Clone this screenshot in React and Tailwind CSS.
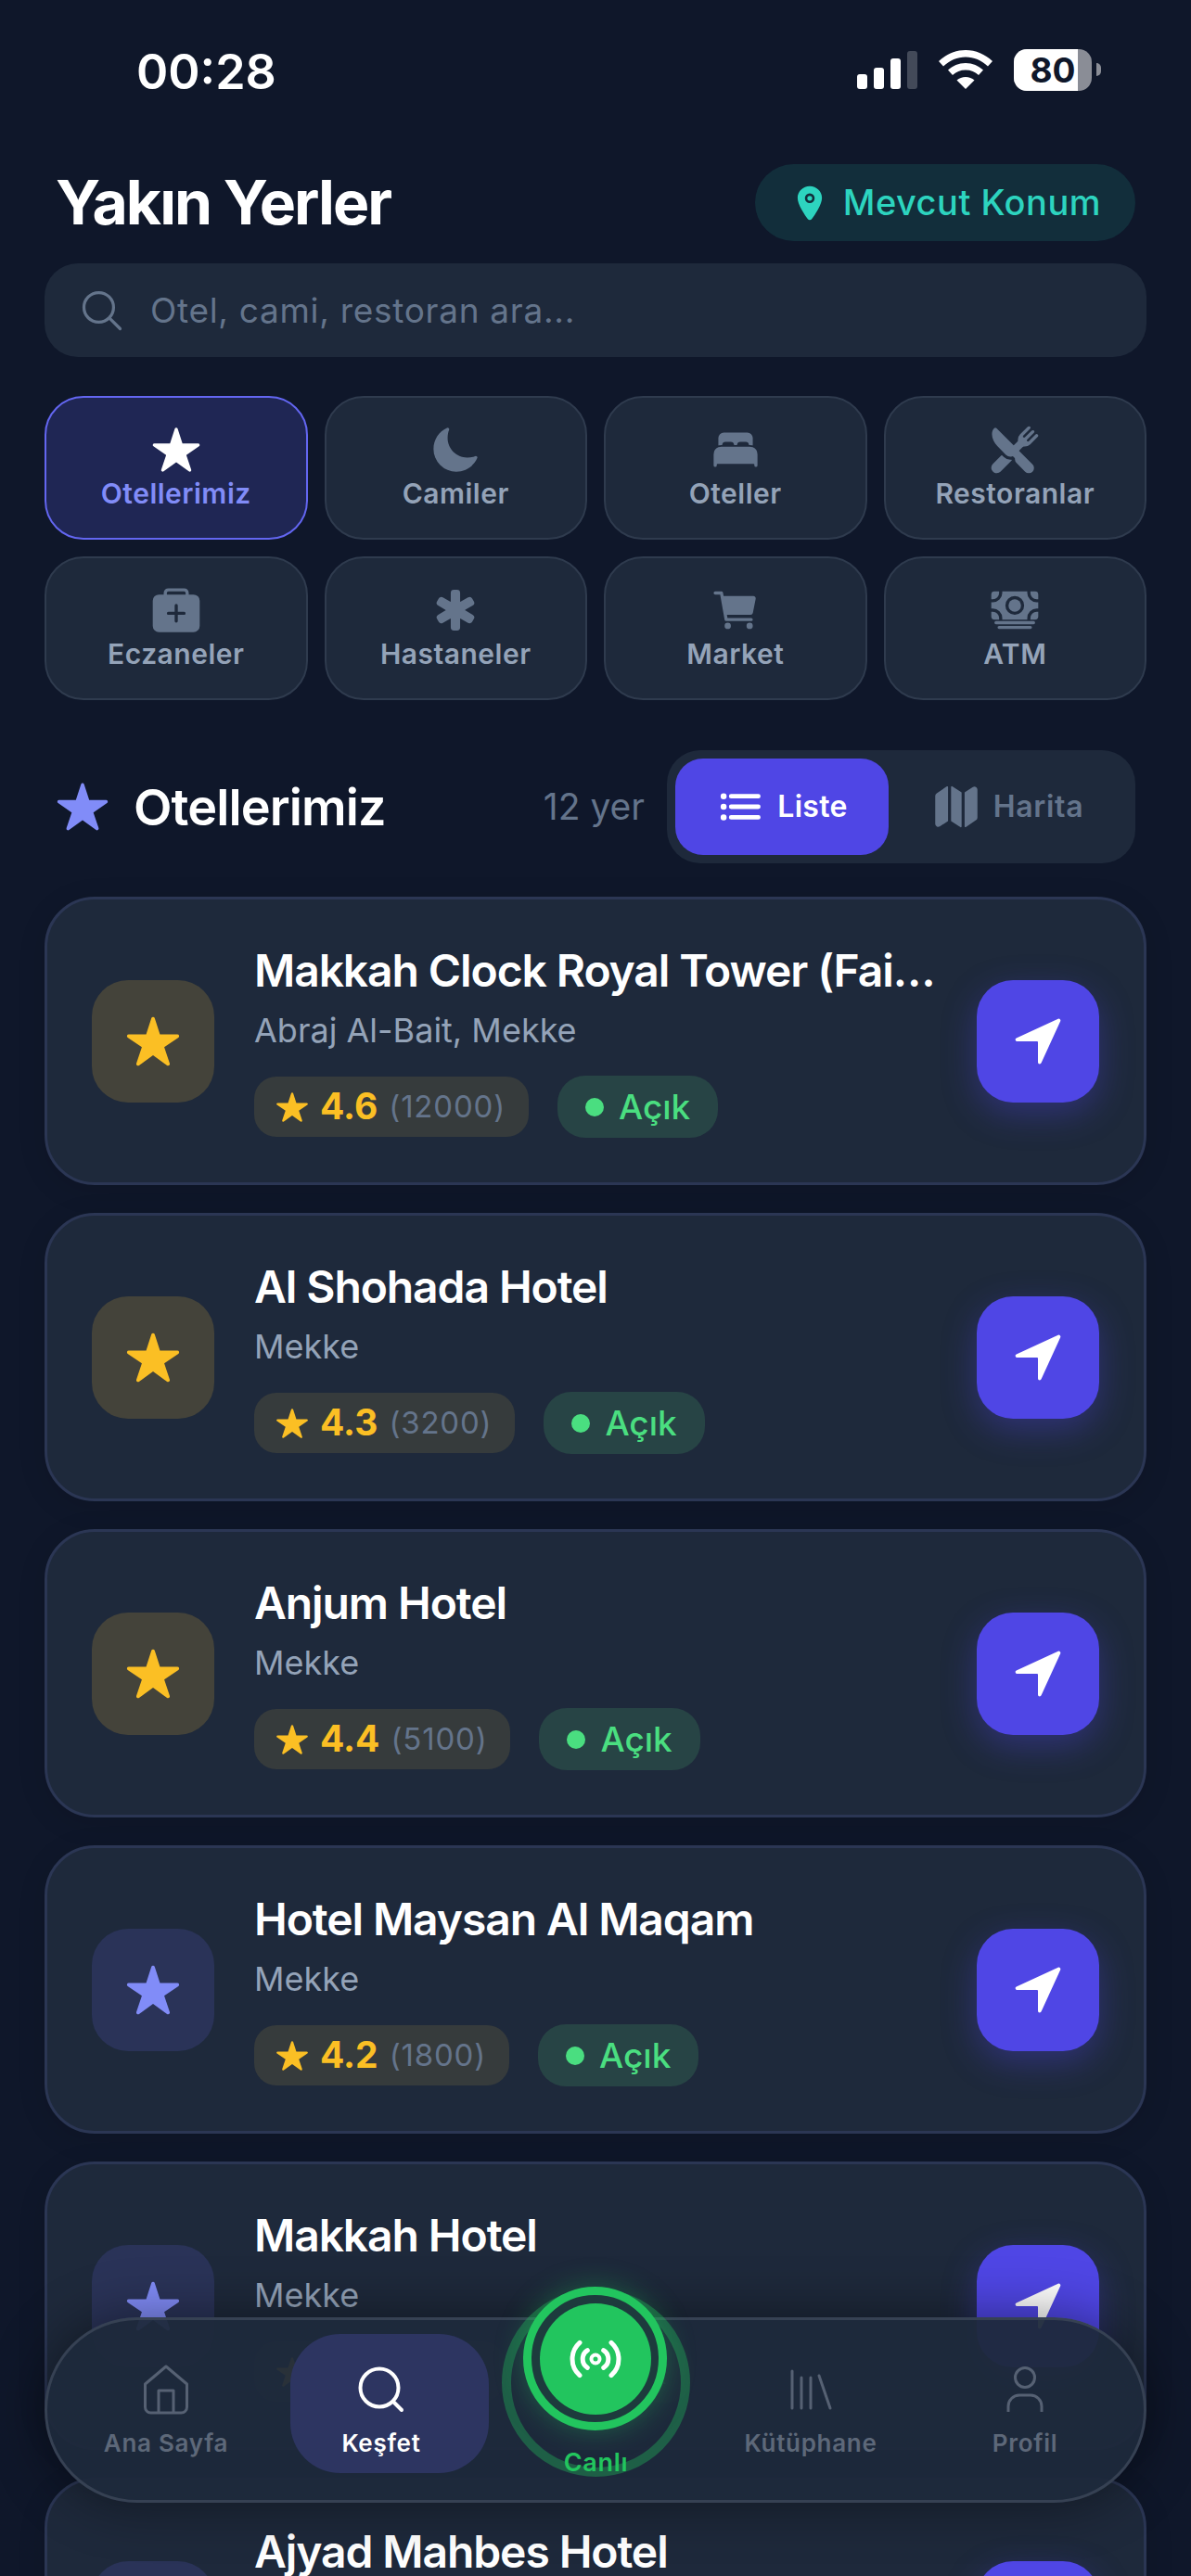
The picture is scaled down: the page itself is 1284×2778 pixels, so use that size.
import {
  IoStar,
  IoMoon,
  IoBed,
  IoRestaurant,
  IoMedkit,
  IoMedical,
  IoCart,
  IoCash,
  IoNavigate,
  IoList,
  IoMap,
  IoSearchOutline,
  IoLocation,
} from 'react-icons/io5';

const chips = [
  { label: 'Otellerimiz', icon: IoStar, active: true },
  { label: 'Camiler', icon: IoMoon },
  { label: 'Oteller', icon: IoBed },
  { label: 'Restoranlar', icon: IoRestaurant },
  { label: 'Eczaneler', icon: IoMedkit },
  { label: 'Hastaneler', icon: IoMedical },
  { label: 'Market', icon: IoCart },
  { label: 'ATM', icon: IoCash },
];

const places = [
  { name: 'Makkah Clock Royal Tower (Faisal Suite)', area: 'Abraj Al-Bait, Mekke', rating: '4.6', count: '12000', gold: true },
  { name: 'Al Shohada Hotel', area: 'Mekke', rating: '4.3', count: '3200', gold: true },
  { name: 'Anjum Hotel', area: 'Mekke', rating: '4.4', count: '5100', gold: true },
  { name: 'Hotel Maysan Al Maqam', area: 'Mekke', rating: '4.2', count: '1800' },
  { name: 'Makkah Hotel', area: 'Mekke', rating: '4.1', count: '2500' },
  { name: 'Ajyad Mahbes Hotel', area: 'Mekke', rating: '4.0', count: '900' },
];

const HomeIcon = () => (
  <svg width="50" height="54" viewBox="0 0 50 54" fill="none" stroke="currentColor" strokeWidth="3" strokeLinejoin="round">
    <path d="M25 2 L2.500 21 V46 a6 6 0 0 0 6 6 H41.500 a6 6 0 0 0 6-6 V21 Z" />
    <path d="M17 52 V28 H33 V52" />
  </svg>
);

const SearchIcon = () => (
  <svg width="50" height="50" viewBox="0 0 50 50" fill="none" stroke="currentColor" strokeWidth="4" strokeLinecap="round">
    <circle cx="23" cy="23" r="20.500" />
    <path d="M38 38 L47 47" />
  </svg>
);

const LibraryIcon = () => (
  <svg width="46" height="44" viewBox="0 0 46 44" fill="none" stroke="currentColor" strokeWidth="3" strokeLinecap="round">
    <path d="M3 2 V42 M13 9 V42 M23 9 V42 M32 7 L44 42" />
  </svg>
);

const PersonIcon = () => (
  <svg width="40" height="50" viewBox="0 0 40 50" fill="none" stroke="currentColor" strokeWidth="3">
    <circle cx="20" cy="12" r="10.500" />
    <path d="M2 49 V43 a12 12 0 0 1 12-12 H26 a12 12 0 0 1 12 12 V49" />
  </svg>
);

const LiveIcon = () => (
  <svg width="60" height="48" viewBox="0 0 60 48" fill="none" stroke="#fff" strokeWidth="5" strokeLinecap="round">
    <path d="M13 6.300 A23.600 23.600 0 0 0 13 41.700 M47 6.300 A23.600 23.600 0 0 1 47 41.700" />
    <path d="M21.300 14.700 A11 11 0 0 0 21.300 33.300 M38.700 14.700 A11 11 0 0 1 38.700 33.300" />
    <circle cx="30" cy="24" r="4.500" strokeWidth="4" />
  </svg>
);

const StatusBar = () => (
  <div className="flex items-center justify-between h-[177px] pb-[27px] pl-[99px] pr-[49px]">
    <span className="mt-[6px] text-[52px] font-semibold text-white">00:28</span>
    <div className="flex items-center">
      <div className="flex items-end gap-[7px] h-[41px]">
        <div className="w-[11px] h-[16px] rounded-[3px] bg-white" />
        <div className="w-[11px] h-[23px] rounded-[3px] bg-white" />
        <div className="w-[11px] h-[33px] rounded-[3px] bg-white" />
        <div className="w-[11px] h-[41px] rounded-[3px] bg-[#434a59]" />
      </div>
      <svg width="58" height="42" viewBox="0 0 58 42" className="ml-[23px]">
        <path d="M29 0C18 0 8 4.500 0 12l5 5.500C12 11 20 7.500 29 7.500S46 11 53 17.500l5-5.500C50 4.500 40 0 29 0z" fill="#fff" />
        <path d="M29 14c-7.500 0-14 3-19 7.500l5 5.500c3.500-3.500 8.500-5.500 14-5.500s10.500 2 14 5.500l5-5.500C43 17 36.500 14 29 14z" fill="#fff" />
        <path d="M29 29c-3.500 0-7 1.300-9.500 3.500L29 42l9.500-9.500C36 30.300 32.500 29 29 29z" fill="#fff" />
      </svg>
      <div className="relative ml-[23px] w-[84px] h-[45px] rounded-[14px] overflow-hidden bg-[#8a8d96] flex items-center justify-center">
        <div className="absolute left-0 top-0 bottom-0 w-[69px] bg-white" />
        <span className="relative text-[37px] font-bold leading-none text-[#0f172a]">80</span>
      </div>
      <div className="ml-[5px] w-[5px] h-[14px] rounded-r-full bg-[#8a8d96]" />
    </div>
  </div>
);

const PlaceCard = ({ place }) => (
  <div className="flex items-center gap-[43px] h-[311px] shrink-0 px-[48px] rounded-[54px] bg-[#1e293b] border-[3px] border-[#2b3654] shadow-[0_6px_30px_rgba(0,0,0,0.12)]">
    <div
      className={`flex items-center justify-center shrink-0 w-[132px] h-[132px] rounded-[39px] ${
        place.gold ? 'bg-[#44433a]' : 'bg-[#2a3358]'
      }`}
    >
      <IoStar className={`w-[60px] h-[60px] ${place.gold ? 'text-[#fbbf24]' : 'text-[#818cf8]'}`} />
    </div>
    <div className="flex-1 min-w-0">
      <div className="text-[48px] leading-[58px] font-semibold tracking-[-1.1px] text-white truncate">{place.name}</div>
      <div className="mt-[11px] text-[36px] leading-[48px] text-[#94a3b8]">{place.area}</div>
      <div className="mt-[25px] flex items-center gap-[31px]">
        <div className="flex items-center gap-[12px] h-[65px] pl-[23px] pr-[25px] rounded-[24px] bg-[#363b3c]">
          <IoStar className="w-[36px] h-[36px] text-[#fbbf24]" />
          <span className="text-[39px] font-bold text-[#fbbf24]">{place.rating}</span>
          <span className="text-[33px] text-[#64748b] tracking-[0.8px]">({place.count})</span>
        </div>
        <div className="flex items-center gap-[16px] h-[67px] px-[30px] rounded-[30px] bg-[#274445]">
          <div className="w-[20px] h-[20px] rounded-full bg-[#4ade80]" />
          <span className="text-[37px] font-medium text-[#4ade80]">Açık</span>
        </div>
      </div>
    </div>
    <div className="flex items-center justify-center shrink-0 w-[132px] h-[132px] rounded-[39px] bg-[#4f46e5] shadow-[0_12px_36px_rgba(79,70,229,0.35)]">
      <IoNavigate className="w-[60px] h-[60px] text-white" />
    </div>
  </div>
);

const NavItem = ({ label, icon: Icon, width, active }) => (
  <div
    className={`flex flex-col items-center shrink-0 h-[150px] pt-[32px] rounded-[54px] ${width} ${
      active ? 'bg-[#2d3561] text-white pr-[18px]' : 'text-[#566173]'
    }`}
  >
    <div className="flex items-center justify-center h-[56px]">
      <Icon />
    </div>
    <span className={`mt-[13px] text-[26px] leading-[34px] font-semibold tracking-[0.7px] ${active ? 'text-white' : 'text-[#5d6879]'}`}>
      {label}
    </span>
  </div>
);

const BottomNav = () => (
  <div className="absolute left-[48px] right-[48px] top-[2499px] h-[200px] flex items-start gap-[21px] pl-[15px] pt-[15px] rounded-[100px] bg-[#1e293b]/95 border-[3px] border-[#364153] shadow-[0_0_60px_rgba(0,0,0,0.45)]">
    <NavItem label="Ana Sayfa" icon={HomeIcon} width="w-[226px]" />
    <NavItem label="Keşfet" icon={SearchIcon} width="w-[214px]" active />
    <div className="w-[188px] shrink-0" />
    <NavItem label="Kütüphane" icon={LibraryIcon} width="w-[234px]" />
    <NavItem label="Profil" icon={PersonIcon} width="w-[186px]" />

    {/* live button sticks out of the bar */}
    <div className="absolute left-[490px] top-[-34px] w-[203px] h-[203px] rounded-full border-[10px] border-[#22c55e]/35" />
    <div className="absolute left-[513px] top-[-36px] w-[155px] h-[155px] rounded-full border-[9px] border-[#22c55e] bg-[#1d3b3d] flex items-center justify-center shadow-[0_0_30px_rgba(34,197,94,0.35)]">
      <div className="w-[120px] h-[120px] rounded-full bg-[#22c55e] flex items-center justify-center">
        <LiveIcon />
      </div>
    </div>
    <span className="absolute left-[490px] w-[203px] top-[137px] text-center text-[27px] leading-[34px] font-semibold tracking-[0.7px] text-[#22c55e]">
      Canlı
    </span>
  </div>
);

export default function App() {
  return (
    <div className="relative h-[2778px] overflow-hidden bg-[#0f172a] font-['Inter',sans-serif] px-[48px]">
      <StatusBar />

      <div className="flex items-center justify-between h-[83px] pl-[12px] mr-[12px]">
        <h1 className="text-[66px] font-bold tracking-[-2px] text-white">Yakın Yerler</h1>
        <div className="flex items-center gap-[15px] h-[83px] pl-[38px] pr-[37px] rounded-full bg-[#122e3b]">
          <IoLocation className="w-[42px] h-[42px] text-[#2dd4bf]" />
          <span className="text-[38px] font-medium tracking-[0.5px] text-[#2dd4bf]">Mevcut Konum</span>
        </div>
      </div>

      <div className="mt-[24px] flex items-center gap-[26px] h-[101px] px-[36px] rounded-[36px] bg-[#1e293b]">
        <IoSearchOutline className="w-[52px] h-[52px] text-[#64748b]" />
        <span className="text-[37px] tracking-[0.7px] text-[#64748b]">Otel, cami, restoran ara...</span>
      </div>

      <div className="mt-[42px] grid grid-cols-4 gap-[18px]">
        {chips.map((chip) => (
          <div
            key={chip.label}
            className={`flex flex-col items-center h-[155px] pt-[29px] rounded-[42px] border-[2px] ${
              chip.active ? 'bg-[#1f2654] border-[#6366f1]' : 'bg-[#1e293b] border-[#2f3b4e]'
            }`}
          >
            <chip.icon className={`w-[54px] h-[54px] ${chip.active ? 'text-white' : 'text-[#64748b]'}`} />
            <span className={`text-[30px] leading-[40px] font-semibold tracking-[0.5px] ${chip.active ? 'text-[#818cf8]' : 'text-[#94a3b8]'}`}>
              {chip.label}
            </span>
          </div>
        ))}
      </div>

      <div className="mt-[54px] flex items-center justify-between pl-[12px] mr-[12px]">
        <div className="flex items-center gap-[26px]">
          <IoStar className="w-[58px] h-[58px] text-[#818cf8]" />
          <span className="text-[54px] font-semibold tracking-[-0.9px] text-white">Otellerimiz</span>
        </div>
        <div className="flex items-center gap-[24px]">
          <span className="text-[39px] text-[#64748b]">12 yer</span>
          <div className="flex items-center h-[122px] w-[505px] p-[9px] rounded-[36px] bg-[#1e293b]">
            <div className="flex items-center justify-center gap-[14px] w-[230px] h-[104px] rounded-[30px] bg-[#4f46e5]">
              <IoList className="w-[52px] h-[52px] text-white" />
              <span className="text-[32px] font-semibold tracking-[0.3px] text-white">Liste</span>
            </div>
            <div className="flex items-center justify-center gap-[14px] flex-1 h-[104px]">
              <IoMap className="w-[52px] h-[52px] text-[#64748b]" />
              <span className="text-[32px] font-semibold tracking-[0.7px] text-[#64748b]">Harita</span>
            </div>
          </div>
        </div>
      </div>

      <div className="mt-[36px] flex flex-col gap-[30px]">
        {places.map((place) => (
          <PlaceCard key={place.name} place={place} />
        ))}
      </div>

      <BottomNav />
    </div>
  );
}
